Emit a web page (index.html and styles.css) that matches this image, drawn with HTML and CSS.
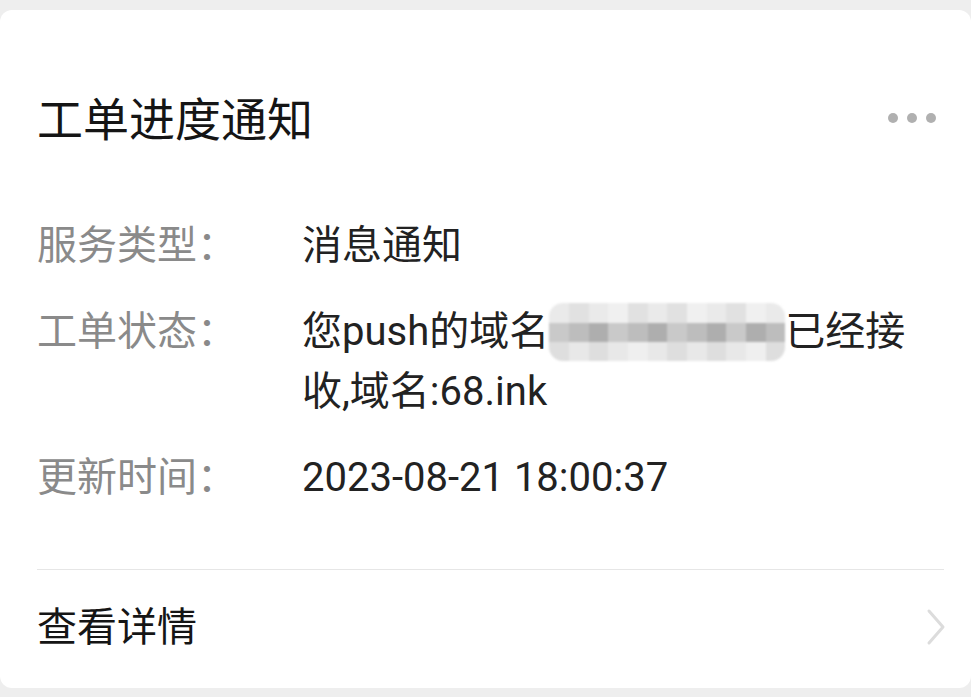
FILE: index.html
```html
<!DOCTYPE html>
<html lang="zh-CN">
<head>
<meta charset="utf-8">
<title>工单进度通知</title>
<link rel="stylesheet" href="styles.css">
</head>
<body>
<div class="card">
  <div class="header">
    <div class="title">工单进度通知</div>
    <div class="more"><span class="dot"></span><span class="dot"></span><span class="dot"></span></div>
  </div>
  <div class="rows">
    <div class="row">
      <div class="label">服务类型：</div>
      <div class="value">消息通知</div>
    </div>
    <div class="row">
      <div class="label">工单状态：</div>
      <div class="value">您push的域名<span class="mosaic"><span class="m-row m-top"><i class="c1"></i><i class="c2"></i><i class="c1"></i><i class="c3"></i><i class="c2"></i><i class="c1"></i><i class="c2"></i><i class="c3"></i><i class="c1"></i><i class="c2"></i><i class="c3"></i><i class="c1"></i></span><span class="m-row m-mid"><i class="d2"></i><i class="d1"></i><i class="d3"></i><i class="d2"></i><i class="d1"></i><i class="d3"></i><i class="d2"></i><i class="d1"></i><i class="d3"></i><i class="d2"></i><i class="d3"></i><i class="d1"></i></span><span class="m-row m-bot"><i class="c2"></i><i class="c1"></i><i class="c2"></i><i class="c1"></i><i class="c3"></i><i class="c1"></i><i class="c2"></i><i class="c1"></i><i class="c2"></i><i class="c1"></i><i class="c3"></i><i class="c2"></i></span></span>已经接收,域名:68.ink</div>
    </div>
    <div class="row">
      <div class="label">更新时间：</div>
      <div class="value">2023-08-21 18:00:37</div>
    </div>
  </div>
  <div class="divider"></div>
  <div class="footer">
    <div class="link">查看详情</div>
    <svg class="chev" width="20" height="40" viewBox="0 0 20 40"><polyline points="3,3 17,19 3,35" fill="none" stroke="#dcdcdc" stroke-width="3" stroke-linecap="round" stroke-linejoin="round"/></svg>
  </div>
</div>
</body>
</html>
```

FILE: styles.css
```css
html, body {
  margin: 0;
  padding: 0;
}
body {
  background: #eeeeee;
  font-family: Roboto, "Noto Sans CJK SC", sans-serif;
  padding: 10px 0 9px 0;
  width: 971px;
  height: 697px;
  box-sizing: border-box;
  overflow: hidden;
}
.card {
  background: #ffffff;
  border-radius: 12px;
  height: 678px;
  box-sizing: border-box;
  padding: 80px 27px 0 37px;
  display: flex;
  flex-direction: column;
}
.header {
  display: flex;
  align-items: center;
  justify-content: space-between;
  height: 60px;
}
.title {
  font-size: 46px;
  line-height: 60px;
  color: #151515;
}
.more {
  display: flex;
  gap: 9px;
  margin-right: 8px;
  margin-top: -4px;
}
.dot {
  width: 10px;
  height: 10px;
  border-radius: 50%;
  background: #b0b0b0;
}
.rows {
  margin-top: 66px;
  display: flex;
  flex-direction: column;
  gap: 26px;
}
.row {
  display: flex;
  font-size: 40px;
  line-height: 60px;
}
.label {
  width: 265px;
  flex: none;
  color: #8a8a8a;
}
.value {
  width: 620px;
  color: #222222;
}
.mosaic {
  display: inline-flex;
  flex-direction: column;
  vertical-align: middle;
  width: 236px;
  height: 58px;
  margin-top: -4px;
  filter: blur(1.2px);
  border-radius: 14px;
  overflow: hidden;
}
.m-row {
  display: flex;
  flex: 1;
}
.m-row i {
  flex: 1;
  display: block;
}
.m-top { opacity: 0.9; }
.c1 { background: #e8e8e8; }
.c2 { background: #dedede; }
.c3 { background: #efefef; }
.d1 { background: #bdbdbd; }
.d2 { background: #c9c9c9; }
.d3 { background: #aeaeae; }
.divider {
  margin-top: 61px;
  height: 1px;
  background: #e6e6e6;
}
.footer {
  display: flex;
  align-items: center;
  justify-content: space-between;
  height: 120px;
  margin-top: -1px;
}
.link {
  font-size: 40px;
  line-height: 60px;
  color: #151515;
}
.chev {
  margin-right: -2px;
}
```
